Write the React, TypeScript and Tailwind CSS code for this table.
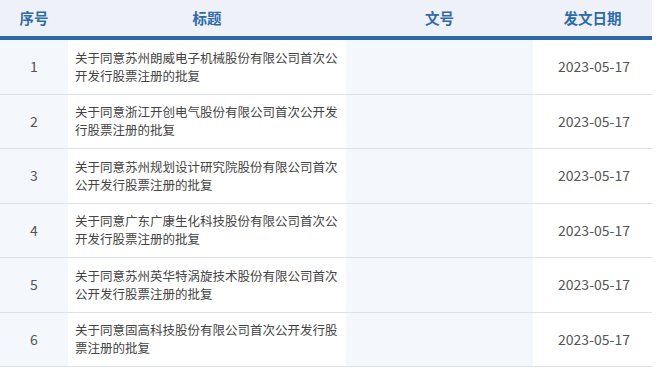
const rows = [
  { id: 1, title: "关于同意苏州朗威电子机械股份有限公司首次公开发行股票注册的批复", date: "2023-05-17" },
  { id: 2, title: "关于同意浙江开创电气股份有限公司首次公开发行股票注册的批复", date: "2023-05-17" },
  { id: 3, title: "关于同意苏州规划设计研究院股份有限公司首次公开发行股票注册的批复", date: "2023-05-17" },
  { id: 4, title: "关于同意广东广康生化科技股份有限公司首次公开发行股票注册的批复", date: "2023-05-17" },
  { id: 5, title: "关于同意苏州英华特涡旋技术股份有限公司首次公开发行股票注册的批复", date: "2023-05-17" },
  { id: 6, title: "关于同意固高科技股份有限公司首次公开发行股票注册的批复", date: "2023-05-17" },
];

export default function App() {
  return (
    <div className="w-[660px] h-[370px] overflow-hidden bg-white font-['Noto_Sans_CJK_SC','Noto_Sans',sans-serif]">
      <div className="w-[652px]">
        {/* header */}
        <div className="grid grid-cols-[68px_278px_187px_119px] h-[36px] bg-[#eef2f8] text-[14.5px] font-bold text-[#2f6aa9]">
          <div className="flex items-center justify-center">序号</div>
          <div className="flex items-center justify-center">标题</div>
          <div className="flex items-center justify-center">文号</div>
          <div className="flex items-center justify-center">发文日期</div>
        </div>
        <div className="h-[4px] bg-[#2c69a7]" />
        {rows.map((r) => (
          <div
            key={r.id}
            className="grid grid-cols-[68px_278px_187px_119px] h-[54.5px] border-b border-[#dde2e8]"
          >
            <div className="flex items-center justify-center bg-[#f4f7fb] text-[14px] text-[#555]">
              {r.id}
            </div>
            <div className="flex items-center pl-[7px] bg-white">
              <p className="w-[264px] text-[12.5px] leading-[18px] text-[#444]">{r.title}</p>
            </div>
            <div className="bg-[#f4f7fb]" />
            <div className="flex items-center justify-center text-[14px] text-[#555] pl-[3px]">
              {r.date}
            </div>
          </div>
        ))}
      </div>
    </div>
  );
}
